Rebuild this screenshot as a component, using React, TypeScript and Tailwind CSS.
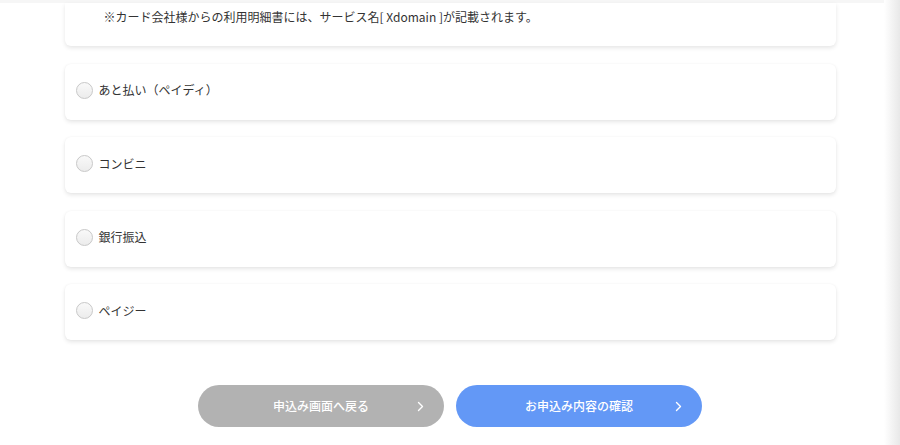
import React, { useState } from 'react';

const methods = ['あと払い（ペイディ）', 'コンビニ', '銀行振込', 'ペイジー'];

const Chevron: React.FC = () => (
  <svg width="7" height="11" viewBox="0 0 7 11" fill="none">
    <path d="M1.5 1.5L5.5 5.5L1.5 9.5" stroke="white" strokeWidth="1.4" strokeLinecap="round" strokeLinejoin="round" />
  </svg>
);

const App: React.FC = () => {
  const [selected, setSelected] = useState<string | null>(null);

  return (
    <div className="relative w-[900px] h-[445px] overflow-hidden bg-white text-[#333] font-['Noto_Sans_CJK_JP','Noto_Sans',sans-serif]">
      <div className="h-[3px] bg-[#f6f6f6]" />
      <div className="flex flex-col items-center gap-[17.5px]">
        {/* credit card note, top cut off */}
        <div className="w-[771px] h-[43px] bg-white rounded-b-[6px] shadow-[0_2px_4px_rgba(0,0,0,0.1)] pt-[4px] pl-[39px]">
          <p className="text-[12px] leading-[20px]">※カード会社様からの利用明細書には、サービス名[ Xdomain ]が記載されます。</p>
        </div>
        {methods.map((m) => (
          <label
            key={m}
            className="w-[771px] h-[56px] bg-white rounded-[6px] shadow-[0_2px_4px_rgba(0,0,0,0.1),0_0_2px_rgba(0,0,0,0.04)] flex items-center gap-[6px] pl-[11px] pb-[3px] cursor-pointer"
            onClick={() => setSelected(m)}
          >
            <span
              className={
                selected === m
                  ? 'w-[17px] h-[17px] rounded-full border-[5px] border-[#6197f5] bg-white'
                  : 'w-[17px] h-[17px] rounded-full border border-[#c8c8c8] bg-gradient-to-b from-[#f9f9f9] to-[#ececec]'
              }
            />
            <span className="text-[12px] leading-[20px]">{m}</span>
          </label>
        ))}
      </div>

      <div className="flex justify-center gap-[12px] mt-[45px]">
        <button className="w-[246px] h-[42px] rounded-full bg-[#b2b2b2] grid grid-cols-[1fr_auto_1fr] items-center text-white text-[12px] font-medium">
          <span />
          <span>申込み画面へ戻る</span>
          <span className="justify-self-end pr-[20px]"><Chevron /></span>
        </button>
        <button className="w-[246px] h-[42px] rounded-full bg-[#6398f6] grid grid-cols-[1fr_auto_1fr] items-center text-white text-[12px] font-medium">
          <span />
          <span>お申込み内容の確認</span>
          <span className="justify-self-end pr-[20px]"><Chevron /></span>
        </button>
      </div>

      {/* scrollbar track */}
      <div className="absolute right-0 top-0 h-full w-[16px] bg-gradient-to-r from-white to-[#e8e8e8]" />
    </div>
  );
};

export default App;
